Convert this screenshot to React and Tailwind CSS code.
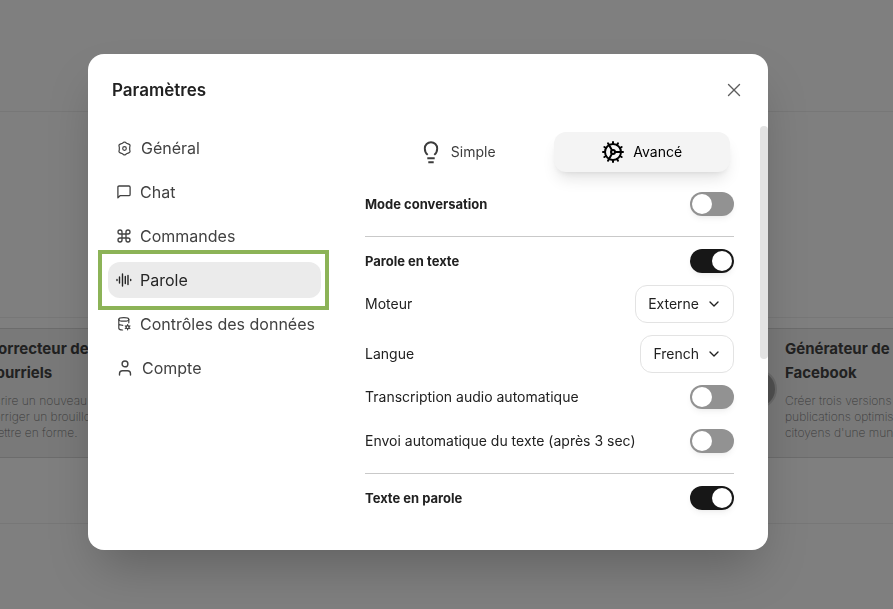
import { useState } from 'react'
import { ChevronDown, Cog, Command, X } from 'lucide-react'

const HexSettingsIcon = () => (
  <svg viewBox="0 0 17 17" className="size-[17px] shrink-0" fill="none" stroke="currentColor" strokeWidth="1.2" strokeLinejoin="round">
    <path d="M7.600 2.300q.9-.5 1.800 0l1.100.9 2.300.9q1.300.5 1.300 1.600l-.4 1.400v2.800l.4 1.400q0 1.100-1.300 1.600l-2.300.9-1.100.9q-.9.5-1.800 0l-1.100-.9-2.300-.9q-1.300-.5-1.300-1.600l.4-1.400V7.100l-.4-1.400q0-1.100 1.300-1.600l2.300-.9Z" />
    <circle cx="8.500" cy="8.500" r="1.800" />
  </svg>
)

const ChatIcon = () => (
  <svg viewBox="0 0 16 16" className="size-4 shrink-0" fill="none" stroke="currentColor" strokeWidth="1.3" strokeLinejoin="round">
    <path d="M1.9 13.8V3.2q0-1.2 1.2-1.2h9.800q1.200 0 1.200 1.200v7.200q0 1.200-1.200 1.200H4.300Z" />
  </svg>
)

const CommandIcon = () => <Command className="size-4 shrink-0" strokeWidth={2} />

const WaveIcon = () => (
  <svg viewBox="0 0 16 16" className="size-4 shrink-0" fill="none" stroke="currentColor" strokeWidth="1.4" strokeLinecap="round">
    <path d="M1 7.5v1M3.500 5v6M6.500 2v12M9.300 4.500v7M12 3.500v9M14.700 7.500v1" />
  </svg>
)

const DatabaseIcon = () => (
  <svg viewBox="0 0 16 16" className="size-4 shrink-0" fill="none" stroke="currentColor" strokeWidth="1.2" strokeLinecap="round">
    <ellipse cx="7.8" cy="3.4" rx="5" ry="1.8" />
    <path d="M2.8 3.4v8.8c0 1 1.6 1.7 3.8 1.8M12.8 3.4v3.4M2.8 7.6c0 .9 1.6 1.6 4 1.7" />
    <circle cx="11.6" cy="11.2" r="1.5" />
    <path d="M11.6 8.6v1M11.6 12.8v1M9.3 9.900l.9.5M13 12l.9.5M9.300 12.500l.9-.5M13 10.400l.9-.5" />
  </svg>
)

const UserIcon = () => (
  <svg viewBox="0 0 18 18" className="size-[18px] shrink-0" fill="none" stroke="currentColor" strokeWidth="1.4" strokeLinecap="round">
    <circle cx="9" cy="4.900" r="2.900" />
    <path d="M3.500 16v-1.300q0-3 3-3h5q3 0 3 3V16" />
  </svg>
)

const BulbIcon = () => (
  <svg viewBox="0 0 24 24" className="size-6 shrink-0" fill="none" stroke="currentColor" strokeWidth="1.9">
    <path d="M8.700 14.900C6.900 13.300 5.800 11.200 5.800 8.400a6.200 6.200 0 0 1 12.400 0c0 2.800-1.100 4.900-2.900 6.500" />
    <path d="M8.300 18.300h7.400M9.300 22.300h5.400" />
  </svg>
)

const navItems = [
  { label: 'Général', icon: HexSettingsIcon },
  { label: 'Chat', icon: ChatIcon },
  { label: 'Commandes', icon: CommandIcon },
  { label: 'Parole', icon: WaveIcon },
  { label: 'Contrôles des données', icon: DatabaseIcon },
  { label: 'Compte', icon: UserIcon },
]

const cards = [
  {
    title: ['Correcteur de', 'courriels'],
    desc: ['Écrire un nouveau', 'corriger un brouillon', 'mettre en forme.'],
  },
  {
    title: ['Générateur de', 'Facebook'],
    desc: ['Créer trois versions', 'publications optimisées', "citoyens d'une municipalité"],
  },
]

const Lines = ({ lines }) => lines.map((line) => <span key={line} className="block">{line}</span>)

const Card = ({ title, desc }) => (
  <article className="flex w-[253px] shrink-0 items-start gap-2 overflow-hidden rounded-lg border border-[#6c6c6c] bg-[#797979] pt-2 pb-4 pl-4">
    <div className="mt-8 size-10 shrink-0 rounded-full border-2 border-[#6a6a6a] bg-[#505050]" />
    <div className="whitespace-nowrap">
      <h3 className="text-[15px] leading-6 font-bold text-[#212121]">
        <Lines lines={title} />
      </h3>
      <p className="mt-2 text-xs leading-4 font-extralight text-[#3a3a3a]">
        <Lines lines={desc} />
      </p>
    </div>
  </article>
)

const Toggle = ({ id, defaultChecked }) => (
  <input
    id={id}
    type="checkbox"
    role="switch"
    defaultChecked={defaultChecked}
    className="h-6 w-11 cursor-pointer appearance-none rounded-full bg-[#929292] p-0.5 shadow-md shadow-black/5 before:block before:size-5 before:rounded-full before:bg-white checked:bg-[#171717] checked:before:translate-x-5"
  />
)

const ToggleRow = ({ id, label, defaultChecked, className }) => (
  <div className={`flex items-center justify-between ${className}`}>
    <label htmlFor={id}>{label}</label>
    <Toggle id={id} defaultChecked={defaultChecked} />
  </div>
)

const SelectRow = ({ id, label, options }) => (
  <div className="flex items-center justify-between">
    <label htmlFor={id}>{label}</label>
    <div className="relative">
      <select
        id={id}
        className="h-[38px] cursor-pointer appearance-none rounded-xl border border-[#e3e3e3] bg-white pr-[34px] pl-3 [field-sizing:content]"
      >
        {options.map((option) => (
          <option key={option}>{option}</option>
        ))}
      </select>
      <ChevronDown className="pointer-events-none absolute inset-y-0 right-3 my-auto size-4" strokeWidth={2} />
    </div>
  </div>
)

const Tab = ({ label, active, onClick, children }) => (
  <button
    type="button"
    role="tab"
    aria-selected={active}
    onClick={onClick}
    className={`flex h-10 cursor-pointer items-center justify-center gap-2 rounded-xl ${
      active ? 'bg-[#f4f4f4] text-black shadow-lg shadow-black/10' : 'text-[#3c3c3c]'
    }`}
  >
    {children}
    {label}
  </button>
)

export default function App() {
  const [section, setSection] = useState('Parole')
  const [tab, setTab] = useState('Avancé')

  return (
    <div className="min-h-screen overflow-hidden bg-[#7f7f7f] font-[Inter,sans-serif]">
      <main aria-hidden="true">
        <div className="h-28 border-b border-[#777777]" />
        <div className="h-[206px] border-b border-[#777777]" />
        <div className="-mr-20 -ml-[78px] flex h-[206px] items-start justify-between border-b border-[#777777] pt-2.5">
          {cards.map((card) => (
            <Card key={card.title[0]} {...card} />
          ))}
        </div>
      </main>

      <div className="fixed inset-0 flex items-start pt-[54px] pr-[125px] pl-22">
        <div
          role="dialog"
          aria-labelledby="dialog-title"
          className="w-full rounded-2xl bg-white shadow-2xl"
        >
          <header className="flex h-[72px] items-center justify-between pr-[23px] pl-6">
            <h2 id="dialog-title" className="text-[17px] leading-6 font-semibold text-[#212121]">
              Paramètres
            </h2>
            <button type="button" aria-label="Fermer" className="cursor-pointer text-[#5d5d5d]">
              <X className="size-[22px]" strokeWidth={1.5} />
            </button>
          </header>

          <div className="flex items-start">
            <nav className="flex w-[233px] shrink-0 flex-col gap-2 pt-1 pl-5">
              {navItems.map(({ label, icon: Icon }) => (
                <button
                  key={label}
                  type="button"
                  onClick={() => setSection(label)}
                  className={`relative flex h-9 cursor-pointer items-center gap-2 rounded-xl px-2 whitespace-nowrap ${
                    section === label ? 'bg-[#ebebeb] text-[#262626]' : 'text-[#424242]'
                  }`}
                >
                  <Icon />
                  {label}
                  {section === label && (
                    <span className="pointer-events-none absolute -inset-y-3 -right-2 -left-2.5 border-4 border-[#8cb357]" />
                  )}
                </button>
              ))}
            </nav>

            <div className="ml-11 min-w-0 flex-1 pt-1.5 pb-7 text-sm text-[#212121]">
              <div role="tablist" className="grid grid-cols-2 gap-2 px-1">
                <Tab label="Simple" active={tab === 'Simple'} onClick={() => setTab('Simple')}>
                  <BulbIcon />
                </Tab>
                <Tab label="Avancé" active={tab === 'Avancé'} onClick={() => setTab('Avancé')}>
                  <Cog className="size-6" strokeWidth={2} />
                </Tab>
              </div>

              <ToggleRow id="conversation" label="Mode conversation" className="h-16 text-[13px] font-bold" />

              <section className="border-y border-[#c9c9c9] pb-2.5">
                <ToggleRow id="stt" label="Parole en texte" defaultChecked className="h-12 text-[13px] font-bold" />
                <div className="flex flex-col gap-3 pb-0.5">
                  <SelectRow id="engine" label="Moteur" options={['Externe', 'Navigateur']} />
                  <SelectRow id="language" label="Langue" options={['French', 'English']} />
                </div>
                <ToggleRow id="transcription" label="Transcription audio automatique" className="h-11" />
                <ToggleRow id="autosend" label="Envoi automatique du texte (après 3 sec)" className="h-11" />
              </section>

              <ToggleRow id="tts" label="Texte en parole" defaultChecked className="h-12 text-[13px] font-bold" />
            </div>

            <div className="ml-[26px] h-[233px] w-2 shrink-0 rounded-full bg-[#e3e3e3]" />
          </div>
        </div>
      </div>
    </div>
  )
}
